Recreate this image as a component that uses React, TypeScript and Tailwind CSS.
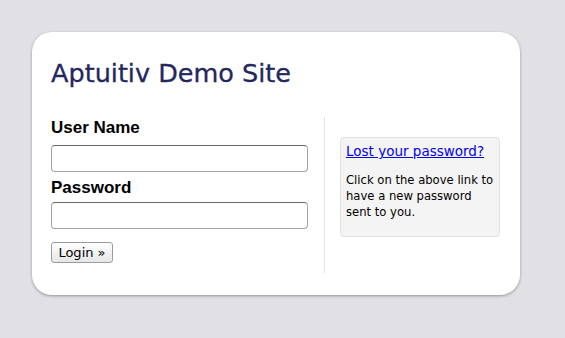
export default function App() {
  return (
    <div className="w-[565px] h-[338px] bg-[#e1e1e5] pt-[32px] pl-[32px]" style={{ fontFamily: '"DejaVu Sans", Verdana, sans-serif' }}>
      <div className="w-[488px] h-[263px] bg-white rounded-[20px] shadow-[0_1px_3px_rgba(0,0,0,0.35)] pl-[19px] pt-[26px] flex flex-col">
        <h1 className="text-[25.5px] leading-[30px] text-[#24275e] [-webkit-text-stroke:0.3px_#24275e]">Aptuitiv Demo Site</h1>
        <div className="flex mt-[29px]">
          <div className="w-[274px] border-r border-[#e4e4e4] h-[156px]">
            <div className="text-[17px] font-bold leading-[21px] text-black" style={{ fontFamily: '"Liberation Sans", Arial, sans-serif' }}>User Name</div>
            <input className="block mt-[7px] w-[257px] h-[27px] border border-[#a5a5a5] border-t-[#666] rounded-[4px] bg-white" />
            <div className="text-[17px] font-bold leading-[21px] text-black mt-[5px]" style={{ fontFamily: '"Liberation Sans", Arial, sans-serif' }}>Password</div>
            <input type="password" className="block mt-[4px] w-[257px] h-[27px] border border-[#a5a5a5] border-t-[#666] rounded-[4px] bg-white" />
            <button className="block mt-[13px] w-[62px] h-[21px] text-[13px] leading-[19px] text-black border border-[#9c9c9c] rounded-[3px] bg-gradient-to-b from-white to-[#e6e6e6]">Login »</button>
          </div>
          <div className="pl-[15px] pt-[20px]">
            <div className="w-[160px] h-[100px] bg-[#f4f4f4] border border-[#e0e0e0] rounded-[4px] px-[5px] pt-[4px] leading-[18px]">
              <a href="#" className="block text-[13.5px] leading-[18px] text-[#0000ee] underline">Lost your password?</a>
              <p className="text-[11.6px] leading-[16px] text-black mt-[12px]">Click on the above link to have a new password sent to you.</p>
            </div>
          </div>
        </div>
      </div>
    </div>
  );
}
